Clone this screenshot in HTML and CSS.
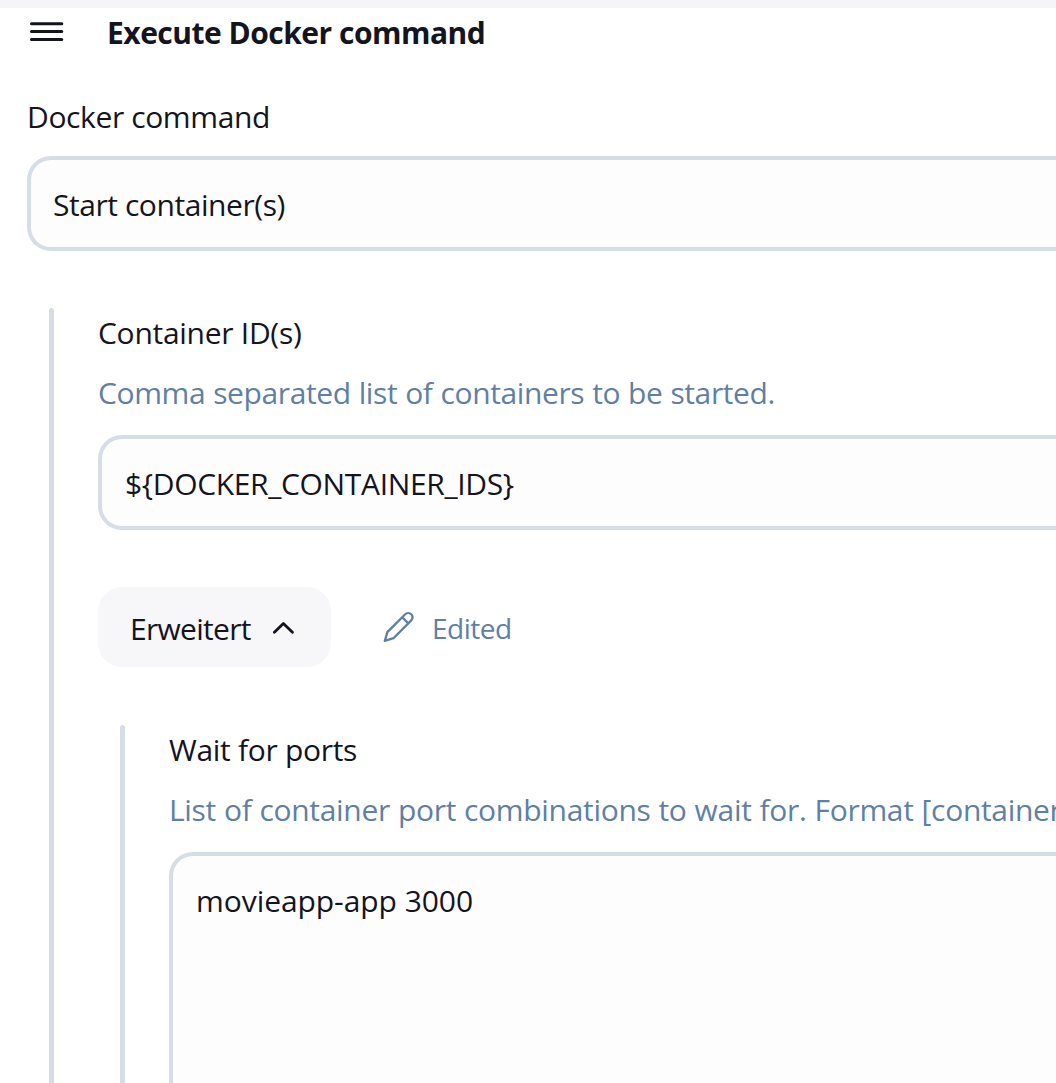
FILE: index.html
```html
<!DOCTYPE html>
<html lang="en">
<head>
<meta charset="utf-8">
<title>Execute Docker command</title>
<link rel="stylesheet" href="styles.css">
</head>
<body>
<div class="topbar"></div>
<header class="header">
  <svg class="menu" width="36" height="24" viewBox="0 0 36 24" fill="none" stroke="currentColor" stroke-width="3" stroke-linecap="round"><path d="M2.5 3.7H32.8M2.5 11.5H32.8M2.5 19.4H32.8"/></svg>
  <h1 class="title">Execute Docker command</h1>
</header>
<main class="form">
  <label class="label label-command">Docker command</label>
  <div class="input input-command">Start container(s)</div>
  <section class="group">
    <label class="label label-ids">Container ID(s)</label>
    <p class="hint">Comma separated list of containers to be started.</p>
    <div class="input input-ids">${DOCKER_CONTAINER_IDS}</div>
    <div class="advanced">
      <button class="toggle"><span>Erweitert</span><svg class="chevron" width="22" height="14" viewBox="0 0 22 14" fill="none" stroke="currentColor" stroke-width="2.8" stroke-linecap="round" stroke-linejoin="round"><path d="M2.4 11.2L11.4 2.4L20.4 11.2"/></svg></button>
      <svg class="pencil" width="32" height="32" viewBox="0 0 32 32" fill="none" stroke="currentColor" stroke-width="2.3" stroke-linejoin="round" stroke-linecap="round"><path d="M1.8 29.8L4.4 21.1L22.2 3.3A4.2 4.2 0 0 1 28.3 9.4L10.5 27.2ZM19.2 6.3L25.3 12.4"/></svg>
      <span class="edited">Edited</span>
    </div>
    <section class="group group-nested">
      <label class="label label-ports">Wait for ports</label>
      <p class="hint hint-ports">List of container port combinations to wait for. Format [container</p>
      <div class="input textarea">movieapp-app 3000</div>
    </section>
  </section>
</main>
</body>
</html>
```
FILE: styles.css
```css
* { box-sizing: border-box; }
html { height: 100%; overflow: hidden; }
body {
  margin: 0;
  height: 1083px;
  overflow: hidden;
  display: flex;
  flex-direction: column;
  background: #fff;
  color: #14141f;
  font: 30px/42px "Open Sans", "Noto Sans", sans-serif;
}
.topbar { height: 8px; flex: none; background: #f5f5f7; }
.header { display: flex; flex: none; padding: 4px 0 0 29px; }
.menu { margin-top: 8px; flex: none; }
.title { margin: 0 0 0 42px; font-size: 30px; line-height: 42px; font-weight: 700; letter-spacing: -0.5px; }
.form { display: flex; flex-direction: column; flex: 1; min-height: 0; padding: 42px 0 0 27px; }
.label { display: block; flex: none; }
.label-command { letter-spacing: -0.38px; }
.label-ids { letter-spacing: -0.28px; }
.label-ports { letter-spacing: -0.3px; }
.input {
  flex: none;
  height: 95px;
  padding: 24px 22px;
  border: 4px solid #d6dde7;
  border-right: 0;
  border-radius: 24px 0 0 24px;
  background: #fdfdfd;
}
.input-command { margin-top: 18px; letter-spacing: -0.44px; }
.input-ids { padding-left: 23px; letter-spacing: -0.34px; }
.hint { margin: 18px 0 21px; color: #5f7fa5; white-space: nowrap; letter-spacing: -0.38px; word-spacing: 0.5px; }
.hint-ports { letter-spacing: -0.31px; word-spacing: 0.5px; }
.group { position: relative; display: flex; flex-direction: column; flex: 1; min-height: 0; margin: 57px 0 0 22px; padding: 4px 0 0 49px; }
.group::before { content: ""; position: absolute; left: 0; top: 0; bottom: -6px; width: 5px; border-radius: 3px; background: #d6dde7; }
.group-nested { margin-top: 58px; }
.advanced { display: flex; align-items: center; flex: none; height: 80px; margin-top: 57px; }
.toggle {
  display: flex;
  align-items: center;
  width: 233px;
  height: 80px;
  padding: 0 0 0 32px;
  border: 0;
  border-radius: 24px;
  background: #f7f7fa;
  color: inherit;
  font: inherit;
  letter-spacing: -0.7px;
}
.toggle span { width: 142px; text-align: left; padding-top: 4px; }
.chevron { margin-top: 1px; }
.pencil { margin-left: 52px; color: #5f7fa5; }
.edited { margin: 2px 0 0 17px; font-size: 28px; color: #5f7fa5; letter-spacing: -0.5px; }
.textarea { flex: 1; height: auto; padding-left: 23px; border-bottom: 0; border-radius: 24px 0 0 0; letter-spacing: -0.06px; }
```
